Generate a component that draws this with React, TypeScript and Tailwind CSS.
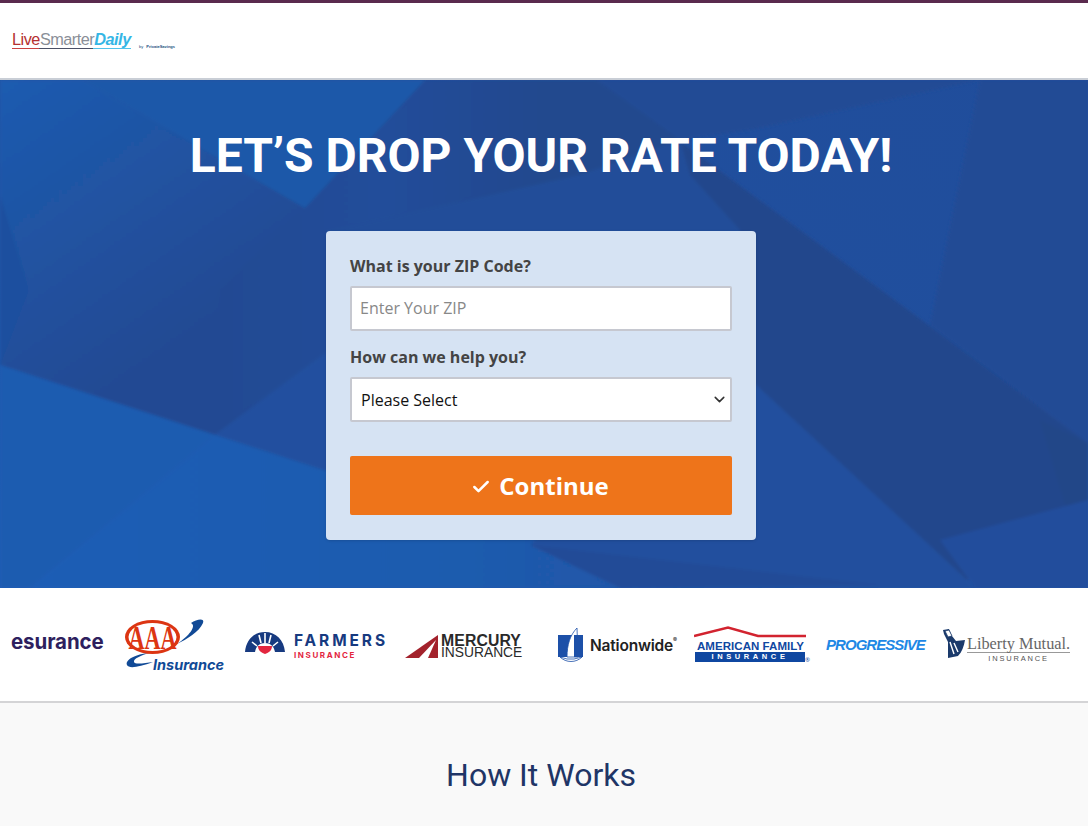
import React from 'react';
import { ChevronDown, Check } from 'lucide-react';

const HeroBackground: React.FC = () => (
  <svg className="absolute inset-0 w-full h-full" viewBox="0 0 1088 508" preserveAspectRatio="none">
    <defs>
      <linearGradient id="heroBase" x1="0" y1="1" x2="1" y2="0">
        <stop offset="0" stopColor="#1e5eb8" />
        <stop offset="0.6" stopColor="#204f9e" />
        <stop offset="1" stopColor="#204d9b" />
      </linearGradient>
      <linearGradient id="wedge" gradientUnits="userSpaceOnUse" x1="0" y1="0" x2="180" y2="260">
        <stop offset="0" stopColor="#1e5bb0" />
        <stop offset="1" stopColor="#214a93" />
      </linearGradient>
      <linearGradient id="centre" gradientUnits="userSpaceOnUse" x1="230" y1="0" x2="540" y2="0">
        <stop offset="0" stopColor="#214a93" />
        <stop offset="0.5" stopColor="#204d9a" />
        <stop offset="1" stopColor="#22488e" />
      </linearGradient>
      <linearGradient id="lowerBand" x1="0" y1="0" x2="1" y2="0">
        <stop offset="0" stopColor="#1e5db5" />
        <stop offset="0.5" stopColor="#1f5bae" />
        <stop offset="1" stopColor="#20509f" />
      </linearGradient>
      <filter id="soften" x="0" y="0" width="100%" height="100%">
        <feGaussianBlur stdDeviation="1.5" />
      </filter>
    </defs>
    <rect width="1088" height="508" fill="url(#heroBase)" />
    <g filter="url(#soften)">
      <polygon points="0,0 83,0 305,128 215,355 0,285" fill="url(#wedge)" />
      <polygon points="83,0 425,0 305,128" fill="#1f59a9" />
      <polygon points="0,115 28,210 0,285" fill="#1f4f9f" />
      <polygon points="327,152 580,95 680,60 690,95 740,150 740,300 327,300" fill="#214d99" />
      <polygon points="305,128 425,0 597,0 680,60 580,95 327,152 330,270 215,355 220,210" fill="url(#centre)" />
      <polygon points="215,355 330,270 400,300 400,415" fill="#20509f" />
      <polygon points="0,285 215,355 30,508 0,508" fill="#1f5bb0" />
      <polygon points="215,355 600,480 880,508 30,508" fill="url(#lowerBand)" />
      <polygon points="740,290 967,500 975,508 640,508 530,465 600,400" fill="#204f9e" />
      <polygon points="597,0 1088,363 1088,430 967,500 740,290 740,150 690,95 680,60" fill="#21478c" />
      <polygon points="750,50 980,0 597,0 680,60" fill="#214b95" />
      <polygon points="980,0 1088,0 1088,363 930,245" fill="#214b95" />
      <polygon points="1040,340 1088,363 1088,430 1065,425" fill="#224688" />
      <polygon points="940,460 1088,420 1088,508 975,508" fill="#204e9c" />
      <polygon points="530,465 880,505 620,508" fill="#214c97" />
    </g>
  </svg>
);

const Field: React.FC<{ label: string; children: React.ReactNode }> = ({ label, children }) => (
  <div className="flex flex-col">
    <label className="text-base leading-[22px] font-bold text-[#444444]">{label}</label>
    <div className="mt-[9px]">{children}</div>
  </div>
);

const Esurance = () => (
  <span className="block w-[91px] mt-[44px] font-['Inter',sans-serif] font-bold text-[20.5px] leading-[20px] tracking-[-0.1px] text-[#2e1f5e]">esurance</span>
);

const AAA = () => (
  <div className="relative w-[98px] h-[54px] ml-[23px] mt-[30px] shrink-0">
    <svg className="absolute inset-0" width="98" height="54" viewBox="0 0 98 54">
      <path d="M52 26 C64 18 72 8 66 5 C72 1 80 0 78 5 C74 14 62 21 52 26 Z" fill="#114a96" />
      <path d="M25 35 C10 36 0 42 2 47 C4 51 14 49 28 44 C20 45 10 47 9 44 C8 41 16 37 25 35 Z" fill="#114a96" />
      <ellipse cx="27.5" cy="19" rx="27.5" ry="17" fill="#dc3512" />
      <ellipse cx="27.5" cy="19" rx="24" ry="14" fill="#ffffff" />
      <text x="27.5" y="31" textAnchor="middle" fontFamily="'Liberation Serif', serif" fontWeight="700" fontSize="34" fill="#dc3512" textLength="48" lengthAdjust="spacingAndGlyphs">AAA</text>
    </svg>
    <span className="absolute left-[28px] top-[40px] font-['Inter',sans-serif] italic font-bold text-[14.5px] leading-[14px] text-[#114a96]">Insurance</span>
  </div>
);

const Farmers = () => (
  <div className="flex items-start gap-[9px] w-[141px] ml-[22px] mt-[44px] shrink-0">
    <svg className="shrink-0" width="40" height="22" viewBox="0 0 40 22">
      <path d="M0 20 C1 8 9 0 20 0 C31 0 39 8 40 20 L30 20 C29 14 25 11 20 11 C15 11 11 14 10 20 Z" fill="#173a80" />
      <path d="M7 10 L12 14 M14 3 L16 11 M20 1 L20 11 M26 3 L24 11 M33 10 L28 14" stroke="#ffffff" strokeWidth="1.6" />
      <path d="M13 14 H27 C27 19 23 21 20 22 C17 21 13 19 13 14 Z" fill="#e3263f" />
    </svg>
    <div className="flex flex-col mt-[1px] font-['Inter',sans-serif]">
      <span className="text-[15.5px] leading-[15px] font-bold tracking-[2.9px] text-[#173a80] whitespace-nowrap">FARMERS</span>
      <span className="mt-[2px] text-[8px] leading-[10px] font-bold tracking-[1.6px] text-[#e3263f]">INSURANCE</span>
    </div>
  </div>
);

const Mercury = () => (
  <div className="flex items-start gap-[3px] w-[117px] ml-[19px] mt-[46px] shrink-0">
    <svg className="mt-[1px] shrink-0" width="33" height="23" viewBox="0 0 33 23">
      <polygon points="0,23 33,0 33,23" fill="#a3222c" />
      <polygon points="14,23 31,5 23,23" fill="#ffffff" />
    </svg>
    <div className="flex flex-col font-['Liberation_Sans',sans-serif] text-[#2a2a2a]">
      <span className="text-[15.8px] leading-[13px] font-bold tracking-[0.1px]">MERCURY</span>
      <span className="text-[13.8px] leading-[12px]">INSURANCE</span>
    </div>
  </div>
);

const Nationwide = () => (
  <div className="flex items-start gap-[6px] w-[118px] ml-[36px] mt-[39px] shrink-0">
    <svg className="shrink-0" width="26" height="36" viewBox="0 0 26 36">
      <rect x="0" y="8" width="25" height="22" fill="#1d50a8" />
      <path d="M9 30 C9 18 12 8 19 1 L20 30 Z" fill="#ffffff" stroke="#1d50a8" strokeWidth="0.8" />
      <rect x="16" y="8" width="9" height="22" fill="#1d50a8" />
      <path d="M2 30 C8 36 18 36 24 30 L16 32 L9 32 Z" fill="#ffffff" stroke="#1d50a8" strokeWidth="0.8" />
    </svg>
    <span className="mt-[11px] font-['Inter',sans-serif] font-semibold text-[15.5px] leading-[16px] tracking-[-0.2px] text-[#222222] whitespace-nowrap">Nationwide<sup className="text-[6px] align-super">®</sup></span>
  </div>
);

const AmericanFamily = () => (
  <div className="relative flex flex-col w-[116px] ml-[18px] mt-[38px] shrink-0">
    <svg width="112" height="12" viewBox="0 0 112 12">
      <path d="M0 10 L34 1.5 L64 10 L112 10" fill="none" stroke="#d2232f" strokeWidth="2.6" />
    </svg>
    <span className="ml-[3px] mt-[2px] font-['Liberation_Sans',sans-serif] font-bold text-[11.5px] leading-[12px] tracking-[0.05px] text-[#0f47a1] whitespace-nowrap">AMERICAN FAMILY</span>
    <span className="ml-[1px] w-[110px] h-[10px] bg-[#0f47a1] text-white text-center font-['Liberation_Sans',sans-serif] font-bold text-[7.5px] leading-[10px] tracking-[3.6px]">INSURANCE</span>
    <span className="absolute right-0 bottom-[-1px] text-[6px] leading-none text-[#0f47a1]">®</span>
  </div>
);

const Progressive = () => (
  <span className="block w-[98px] ml-[16px] mt-[49px] font-['Liberation_Sans',sans-serif] italic font-bold text-[15px] leading-[15px] tracking-[-0.95px] text-[#1e88e5] whitespace-nowrap">PROGRESSIVE</span>
);

const Liberty = () => (
  <div className="flex items-start gap-[1px] w-[128px] ml-[18px] mt-[40px] shrink-0">
    <svg className="shrink-0" width="24" height="32" viewBox="0 0 24 32">
      <path d="M2 6 L6 14 L6 30 L16 28 C20 24 22 18 23 12 L14 13 L10 8 L7 1 L1 2 Z" fill="#1b3a6b" />
      <path d="M3 3 L7 2 L10 8 L6 9 Z" fill="#ffffff" stroke="#1b3a6b" strokeWidth="0.8" />
      <path d="M8 14 L12 26 M12 15 L16 24" stroke="#ffffff" strokeWidth="1.4" />
    </svg>
    <div className="flex flex-col items-center mt-[7px]">
      <span className="font-['Liberation_Serif',serif] text-[16.3px] leading-[17px] text-[#666666] border-b border-[#999999] whitespace-nowrap">Liberty Mutual.</span>
      <span className="font-['Liberation_Sans',sans-serif] text-[7.5px] leading-[11px] tracking-[1.8px] text-[#555555]">INSURANCE</span>
    </div>
  </div>
);

export default function App() {
  return (
    <div className="w-[1088px] h-[826px] overflow-hidden bg-white font-['Open_Sans',sans-serif]">
      <header className="h-20 bg-white border-t-[3px] border-t-[#5a2a4e] border-b-2 border-b-[#c9ced6] flex items-center pl-3">
        <div className="flex items-end mt-[-2px]">
          <div className="flex flex-col">
            <span className="font-['Liberation_Sans',sans-serif] text-[16.3px] leading-[17px] tracking-[-0.5px] whitespace-nowrap">
              <span className="text-[#b5302f]">Live</span>
              <span className="text-[#8a8f98]">Smarter</span>
              <span className="text-[#35b6e5] font-bold italic">Daily</span>
            </span>
            <div className="flex h-px">
              <div className="w-[27px] bg-[#c9403f]" />
              <div className="w-[54px] bg-[#4a5066]" />
              <div className="w-[38px] bg-[#50c2ea]" />
            </div>
          </div>
          <span className="ml-2 mb-[-1px] font-['Liberation_Sans',sans-serif] text-[4px] leading-[6px] text-[#1b4f80] whitespace-nowrap">by <span className="font-bold ml-[2px]">PrivateSavings</span></span>
        </div>
      </header>

      <section className="relative h-[508px] overflow-hidden">
        <HeroBackground />
        <div className="relative flex flex-col items-center pr-[6px]">
          <h1 className="mt-11 font-['Roboto',sans-serif] font-bold text-[48px] leading-[64px] text-white whitespace-nowrap">LET’S DROP YOUR RATE TODAY!</h1>
          <form className="mt-[43px] w-[430px] h-[309px] bg-[#d6e3f3] rounded shadow-sm px-6 pt-6 flex flex-col">
            <Field label="What is your ZIP Code?">
              <input
                placeholder="Enter Your ZIP"
                className="w-full h-[45px] bg-white border-2 border-[#c6c8d0] rounded-[2px] px-2 pb-[2px] text-base text-[#333333] placeholder:text-[#888888] outline-none"
              />
            </Field>
            <div className="mt-[15px]">
              <Field label="How can we help you?">
                <div className="relative h-[45px] bg-white border-2 border-[#c6c8d0] rounded-[2px] flex items-center pl-[9px] text-base text-[#111111]">
                  Please Select
                  <ChevronDown className="absolute right-[2px] top-[12px] w-[17px] h-[17px] text-[#333333]" strokeWidth={2.2} />
                </div>
              </Field>
            </div>
            <button type="button" className="mt-[34px] h-[59px] bg-[#ee741a] rounded-[2px] flex items-center justify-center gap-2 pr-[2px] text-white text-2xl font-bold">
              <Check className="w-[20px] h-[20px] mt-[2px]" strokeWidth={3} />
              Continue
            </button>
          </form>
        </div>
      </section>

      <section className="h-[115px] bg-white border-b-2 border-b-[#d4d4d6] flex items-start pl-[11px]">
        <Esurance />
        <AAA />
        <Farmers />
        <Mercury />
        <Nationwide />
        <AmericanFamily />
        <Progressive />
        <Liberty />
      </section>

      <section className="bg-[#f9f9f9] pt-[50px] h-[200px] pr-[6px]">
        <h2 className="text-center font-['Roboto',sans-serif] text-[32px] leading-[44px] text-[#1f3566]">How It Works</h2>
      </section>
    </div>
  );
}
